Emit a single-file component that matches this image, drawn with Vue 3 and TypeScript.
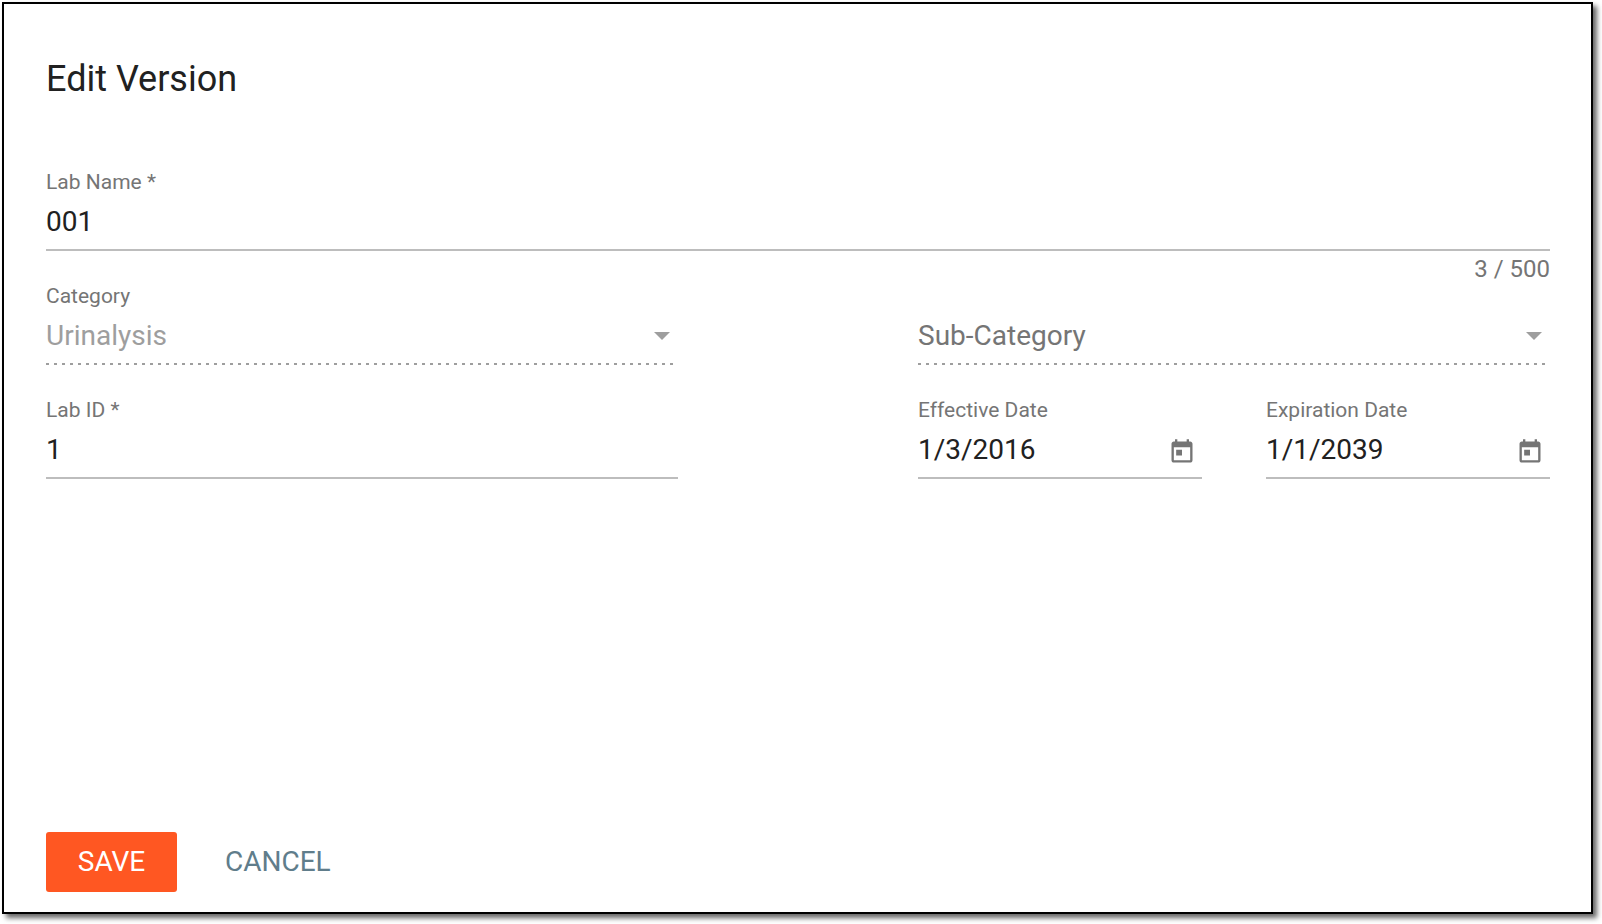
<script setup lang="ts">
const title = 'Edit Version'
</script>

<template>
  <div class="dialog">
    <h2 class="title">{{ title }}</h2>

    <div class="field">
      <label class="label">Lab Name *</label>
      <div class="value line">001</div>
      <div class="counter">3 / 500</div>
    </div>

    <div class="row selects">
      <div class="field">
        <label class="label">Category</label>
        <div class="value dotted">
          <span>Urinalysis</span>
          <svg class="caret" width="16" height="8" viewBox="0 0 16 8"><path d="M0 0h16L8 8z" /></svg>
        </div>
      </div>
      <div class="field">
        <label class="label">&nbsp;</label>
        <div class="value dotted placeholder">
          <span>Sub-Category</span>
          <svg class="caret" width="16" height="8" viewBox="0 0 16 8"><path d="M0 0h16L8 8z" /></svg>
        </div>
      </div>
    </div>

    <div class="row">
      <div class="field">
        <label class="label">Lab ID *</label>
        <div class="value line">1</div>
      </div>
      <div class="dates">
        <div class="field">
          <label class="label">Effective Date</label>
          <div class="value line">
            <span>1/3/2016</span>
            <svg class="cal" width="28" height="28" viewBox="0 0 24 24"><path d="M19 3h-1V1h-2v2H8V1H6v2H5c-1.110 0-1.990.9-1.990 2L3 19c0 1.100.89 2 2 2h14c1.100 0 2-.9 2-2V5c0-1.100-.9-2-2-2zm0 16H5V8h14v11zM7 10h5v5H7z" /></svg>
          </div>
        </div>
        <div class="field">
          <label class="label">Expiration Date</label>
          <div class="value line">
            <span>1/1/2039</span>
            <svg class="cal" width="28" height="28" viewBox="0 0 24 24"><path d="M19 3h-1V1h-2v2H8V1H6v2H5c-1.110 0-1.990.9-1.990 2L3 19c0 1.100.89 2 2 2h14c1.100 0 2-.9 2-2V5c0-1.100-.9-2-2-2zm0 16H5V8h14v11zM7 10h5v5H7z" /></svg>
          </div>
        </div>
      </div>
    </div>

    <div class="actions">
      <button class="btn save">SAVE</button>
      <button class="btn cancel">CANCEL</button>
    </div>
  </div>
</template>

<style>
html, body {
  margin: 0;
  height: 100%;
  background: #fff;
}
</style>

<style scoped>
.dialog {
  box-sizing: border-box;
  width: 1591px;
  height: 912px;
  margin: 2px 0 0 2px;
  padding: 0 41px 20px 42px;
  border: 2px solid #000;
  background: #fff;
  box-shadow: 4px 4px 5px rgba(0, 0, 0, 0.6);
  display: flex;
  flex-direction: column;
  font-family: Roboto, sans-serif;
  color: #212121;
}

.title {
  margin: 51px 0 0;
  font-size: 36px;
  line-height: 48px;
  font-weight: 400;
}

.title + .field {
  margin-top: 68px;
}

.label {
  display: block;
  font-size: 21px;
  line-height: 23px;
  color: #757575;
}

.value {
  display: flex;
  align-items: center;
  justify-content: space-between;
  height: 57px;
  font-size: 28px;
  box-sizing: border-box;
  border-bottom: 2px solid #bdbdbd;
}

.counter {
  font-size: 24px;
  line-height: 26px;
  margin-top: 5px;
  text-align: right;
  color: #757575;
}

.row {
  display: grid;
  grid-template-columns: 632px 632px;
  column-gap: 240px;
  margin-top: 34px;
}

.selects {
  margin-top: 3px;
}

.dotted {
  width: 628px;
  padding-right: 4px;
  border-bottom: none;
  padding-bottom: 2px;
  color: #9e9e9e;
  /* dashed underline of a disabled Material field */
  background: linear-gradient(to right, #9e9e9e 3px, transparent 3px) left bottom / 8px 2px repeat-x;
}

.placeholder {
  color: #757575;
}

.caret path {
  fill: #9e9e9e;
}

.dates {
  display: grid;
  grid-template-columns: 284px 284px;
  column-gap: 64px;
}

.cal {
  margin: 5px 6.5px 0 0;
}

.cal path {
  fill: #757575;
}

.actions {
  margin-top: auto;
  display: flex;
  align-items: center;
  gap: 48px;
}

.btn {
  border: none;
  background: none;
  padding: 0;
  font-family: Roboto, sans-serif;
  font-size: 28px;
  line-height: 60px;
  height: 60px;
}

.save {
  width: 131px;
  background: #ff5722;
  color: #fff;
  border-radius: 3px;
}

.cancel {
  color: #607d8b;
}
</style>
